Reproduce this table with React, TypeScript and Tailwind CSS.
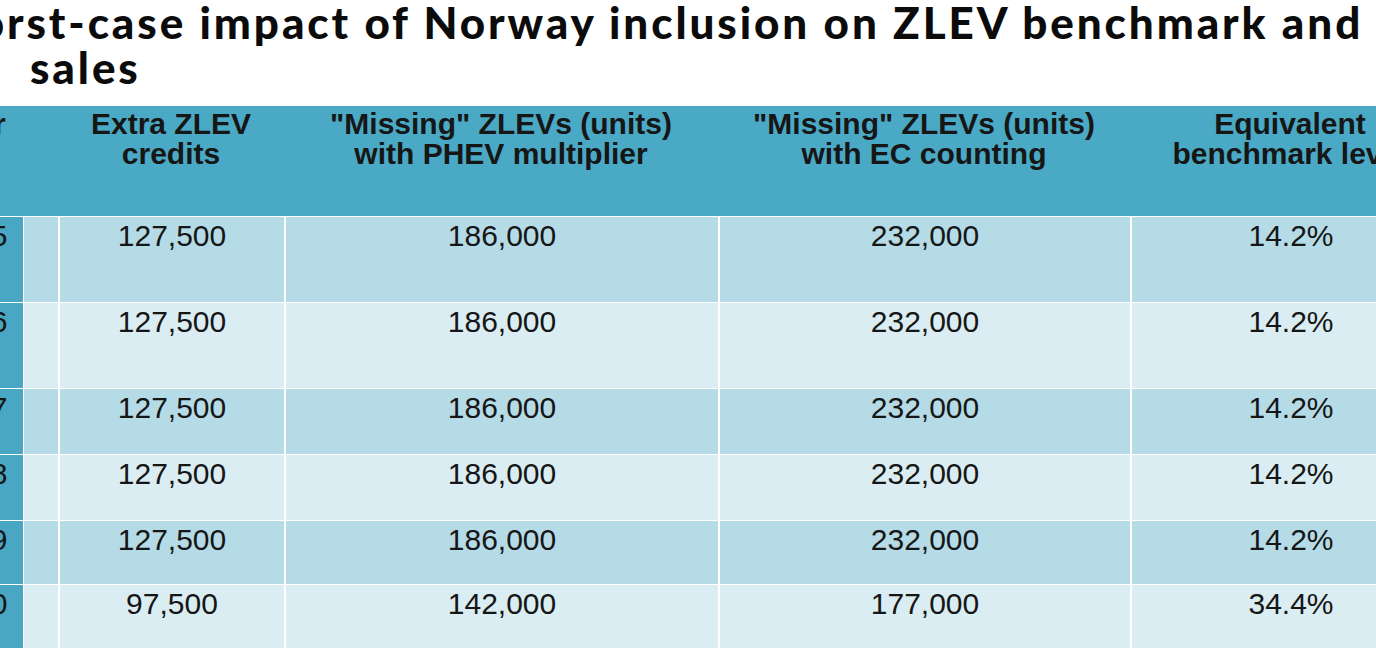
const cols = [
  { key: 'year', w: 'w-[98px]' },
  { key: 'gap', w: 'w-[35px]' },
  { key: 'credits', w: 'w-[226px]' },
  { key: 'phev', w: 'w-[434px]' },
  { key: 'ec', w: 'w-[412px]' },
  { key: 'bench', w: 'w-[320px]' },
];

const rows = [
  { year: '2025', credits: '127,500', phev: '186,000', ec: '232,000', bench: '14.2%', h: 'h-[86px]', bg: 'bg-[#b5dbe6]' },
  { year: '2026', credits: '127,500', phev: '186,000', ec: '232,000', bench: '14.2%', h: 'h-[86px]', bg: 'bg-[#daedf2]' },
  { year: '2027', credits: '127,500', phev: '186,000', ec: '232,000', bench: '14.2%', h: 'h-[66px]', bg: 'bg-[#b5dbe6]' },
  { year: '2028', credits: '127,500', phev: '186,000', ec: '232,000', bench: '14.2%', h: 'h-[66px]', bg: 'bg-[#daedf2]' },
  { year: '2029', credits: '127,500', phev: '186,000', ec: '232,000', bench: '14.2%', h: 'h-[64px]', bg: 'bg-[#b5dbe6]' },
  { year: '2030', credits: '97,500', phev: '142,000', ec: '177,000', bench: '34.4%', h: 'h-[64px]', bg: 'bg-[#daedf2]' },
];

export default function App() {
  return (
    <div className="w-[1376px] h-[664px] overflow-hidden bg-white">
      {/* Title */}
      <div className="font-['Lato',sans-serif] font-black text-[44px] leading-[45px] tracking-[0.066em] text-[#0b0b0b] whitespace-nowrap">
        <div className="ml-[-68px]">Worst-case impact of Norway inclusion on ZLEV benchmark and</div>
        <div className="pl-[30px]">sales</div>
      </div>

      {/* Table */}
      <div className="mt-[16px] ml-[-75px] w-[1525px] font-['Liberation_Sans',Arial,sans-serif] text-[30px] leading-[30px] text-[#161616]">
        <div className="flex h-[110px] bg-[#4aa9c5] font-bold text-center pt-[3px]">
          <div className={cols[0].w}>Year</div>
          <div className={cols[1].w} />
          <div className={cols[2].w}>
            Extra ZLEV
            <br />
            credits
          </div>
          <div className={cols[3].w}>
            "Missing" ZLEVs (units)
            <br />
            with PHEV multiplier
          </div>
          <div className={cols[4].w}>
            "Missing" ZLEVs (units)
            <br />
            with EC counting
          </div>
          <div className={cols[5].w}>
            Equivalent
            <br />
            benchmark level
          </div>
        </div>

        {rows.map((r) => (
          <div key={r.year} className={`flex border-t border-white text-center ${r.h}`}>
            <div className={`${cols[0].w} bg-[#4aa7c3] pt-[4px]`}>{r.year}</div>
            <div className={`${cols[1].w} ${r.bg} border-l border-white`} />
            <div className={`${cols[2].w} ${r.bg} border-l-2 border-white pt-[4px]`}>{r.credits}</div>
            <div className={`${cols[3].w} ${r.bg} border-l-2 border-white pt-[4px]`}>{r.phev}</div>
            <div className={`${cols[4].w} ${r.bg} border-l-2 border-white pt-[4px]`}>{r.ec}</div>
            <div className={`${cols[5].w} ${r.bg} border-l-2 border-white pt-[4px]`}>{r.bench}</div>
          </div>
        ))}
      </div>
    </div>
  );
}
